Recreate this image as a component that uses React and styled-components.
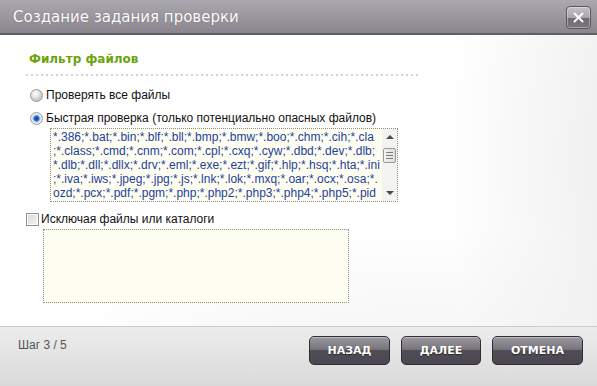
import React from 'react'
import styled, { createGlobalStyle } from 'styled-components'

const GlobalStyle = createGlobalStyle`
  html, body { margin: 0; padding: 0; background: #fff; }
  body { font-family: "Liberation Sans", Arial, sans-serif; }
`

const Window = styled.div`
  width: 597px;
  height: 386px;
  display: flex;
  flex-direction: column;
  overflow: hidden;
  background:
    radial-gradient(ellipse 260px 420px at 118% 40%, #e6e6e6 0%, rgba(255,255,255,0) 100%),
    radial-gradient(ellipse 420px 200px at 70% 110%, #efefef 0%, rgba(255,255,255,0) 100%),
    #fff;
`

const TitleBar = styled.div`
  height: 33px;
  flex: none;
  display: flex;
  align-items: center;
  justify-content: space-between;
  padding: 0 6px 0 13px;
  background: linear-gradient(#aca8af, #8a858e);
  border-bottom: 2px solid #625e66;
`

const Title = styled.div`
  font-family: "DejaVu Sans", Verdana, sans-serif;
  font-size: 15px;
  color: #fff;
  text-shadow: 0 0 1px rgba(60, 56, 64, 0.6);
  letter-spacing: 0;
`

const CloseButton = styled.div`
  width: 23px;
  height: 21px;
  margin-top: 1px;
  border: 1px solid #5a565e;
  border-radius: 4px;
  box-shadow: inset 0 0 0 1px rgba(255, 255, 255, 0.35);
  background: linear-gradient(#c4c1c7 0%, #a9a5ad 50%, #6f6b75 52%, #7a7680 100%);
  display: flex;
  align-items: center;
  justify-content: center;
`

const Body = styled.div`
  flex: 1;
  display: flex;
  flex-direction: column;
  padding-left: 26px;
`

const SectionTitle = styled.div`
  margin-top: 17px;
  padding-left: 3px;
  font-family: "DejaVu Sans", Verdana, sans-serif;
  font-weight: bold;
  font-size: 12px;
  line-height: 15px;
  color: #6aa40c;
`

const Divider = styled.div`
  margin-top: 7px;
  width: 395px;
  height: 2px;
  background: repeating-linear-gradient(to right, #d6d6c8 0 2px, transparent 2px 5px);
`

const Row = styled.label`
  display: flex;
  align-items: center;
  height: 16px;
  margin-top: ${p => p.$top}px;
  padding-left: ${p => p.$indent || 0}px;
  font-size: 12px;
  color: #111;
`

const Radio = styled.span`
  width: 11px;
  height: 11px;
  border-radius: 50%;
  border: 1px solid #9a9a9a;
  margin-right: 3px;
  flex: none;
  background: ${p => p.$checked
    ? 'radial-gradient(circle at 50% 50%, #0d3a8a 0, #2f6fd6 2.5px, #b9d3f2 3.5px, #e9f0f8 5px)'
    : 'radial-gradient(circle at 40% 35%, #ffffff 0, #e2e2e2 4px, #c9c9c9 6px)'};
`

const CheckBox = styled.span`
  width: 11px;
  height: 11px;
  border: 1px solid #8e8e8e;
  margin-right: 2px;
  flex: none;
  background: linear-gradient(135deg, #d6d6d6, #f6f6f6);
  box-shadow: inset 0 0 0 1px #fff;
`

const ListBox = styled.div`
  margin-top: ${p => p.$top}px;
  margin-left: ${p => p.$left}px;
  width: ${p => p.$width}px;
  height: 74px;
  box-sizing: border-box;
  border: 1px dotted #8f8f86;
  background: #fdfdf1;
  display: flex;
`

const Lines = styled.div`
  flex: 1;
  overflow: hidden;
  padding: 1px 0 0 2px;
  font-size: 12px;
  line-height: 14px;
  color: #1f3f9c;
  white-space: pre;
`

const ScrollBar = styled.div`
  width: 15px;
  flex: none;
  display: flex;
  flex-direction: column;
  align-items: center;
  background: #f3f3f0;
`

const Arrow = styled.div`
  width: 0;
  height: 0;
  margin: ${p => p.$up ? '6px 0 0' : 'auto 0 6px'};
  border-left: 4px solid transparent;
  border-right: 4px solid transparent;
  ${p => p.$up ? 'border-bottom: 4px solid #4a4a4a;' : 'border-top: 4px solid #4a4a4a;'}
`

const Thumb = styled.div`
  margin-top: 9px;
  width: 13px;
  height: 15px;
  box-sizing: border-box;
  border: 1px solid #9a9a9a;
  border-radius: 2px;
  background: linear-gradient(to right, #f4f4f4, #dcdcdc);
  display: flex;
  flex-direction: column;
  justify-content: center;
  align-items: center;
  gap: 2px;
  & > span {
    width: 7px;
    height: 1px;
    background: #7d7d7d;
  }
`

const Footer = styled.div`
  height: 50px;
  flex: none;
  border-top: 1px solid #cbcbcb;
  background: linear-gradient(#ececec, #dadada);
  display: flex;
  justify-content: space-between;
  align-items: flex-start;
  padding: 9px 14px 0 18px;
`

const Step = styled.div`
  margin-top: 2px;
  font-size: 12px;
  color: #555;
`

const Buttons = styled.div`
  display: flex;
  gap: 11px;
`

const Button = styled.div`
  width: ${p => p.$width}px;
  height: 29px;
  box-sizing: border-box;
  border: 1px solid #2f2d33;
  border-radius: 5px;
  background: linear-gradient(#9b98a0 0%, #77747c 46%, #504d56 50%, #4a4750 100%);
  box-shadow: inset 0 1px 0 rgba(255, 255, 255, 0.35);
  display: flex;
  align-items: center;
  justify-content: center;
  font-family: "DejaVu Sans", Verdana, sans-serif;
  font-weight: bold;
  font-size: 11px;
  color: #fff;
  text-shadow: 0 1px 1px rgba(0, 0, 0, 0.5);
`

const extensions = [
  '*.386;*.bat;*.bin;*.blf;*.bll;*.bmp;*.bmw;*.boo;*.chm;*.cih;*.cla',
  ';*.class;*.cmd;*.cnm;*.com;*.cpl;*.cxq;*.cyw;*.dbd;*.dev;*.dlb;',
  '*.dlb;*.dll;*.dllx;*.drv;*.eml;*.exe;*.ezt;*.gif;*.hlp;*.hsq;*.hta;*.ini',
  ';*.iva;*.iws;*.jpeg;*.jpg;*.js;*.lnk;*.lok;*.mxq;*.oar;*.ocx;*.osa;*.',
  'ozd;*.pcx;*.pdf;*.pgm;*.php;*.php2;*.php3;*.php4;*.php5;*.pid',
  ';*.pif;*.pl;*.pm;*.prc;*.py;*.reg;*.scr;*.shs;*.sys;*.vbs;*.vxd',
]

export default function App() {
  return (
    <>
      <GlobalStyle />
      <Window>
        <TitleBar>
          <Title>Создание задания проверки</Title>
          <CloseButton>
            <svg width="11" height="11" viewBox="0 0 11 11">
              <path d="M1.5 1.5 L9.5 9.5 M9.5 1.5 L1.5 9.5" stroke="#fff" strokeWidth="2" strokeLinecap="round" />
            </svg>
          </CloseButton>
        </TitleBar>
        <Body>
          <SectionTitle>Фильтр файлов</SectionTitle>
          <Divider />
          <Row $top={11} $indent={4}>
            <Radio />
            Проверять все файлы
          </Row>
          <Row $top={7} $indent={4}>
            <Radio $checked />
            Быстрая проверка (только потенциально опасных файлов)
          </Row>
          <ListBox $top={2} $left={24} $width={348}>
            <Lines>{extensions.join('\n')}</Lines>
            <ScrollBar>
              <Arrow $up />
              <Thumb><span /><span /><span /></Thumb>
              <Arrow />
            </ScrollBar>
          </ListBox>
          <Row $top={9}>
            <CheckBox />
            Исключая файлы или каталоги
          </Row>
          <ListBox $top={2} $left={17} $width={306}>
            <Lines />
          </ListBox>
        </Body>
        <Footer>
          <Step>Шаг 3 / 5</Step>
          <Buttons>
            <Button $width={81}>НАЗАД</Button>
            <Button $width={80}>ДАЛЕЕ</Button>
            <Button $width={91}>ОТМЕНА</Button>
          </Buttons>
        </Footer>
      </Window>
    </>
  )
}
